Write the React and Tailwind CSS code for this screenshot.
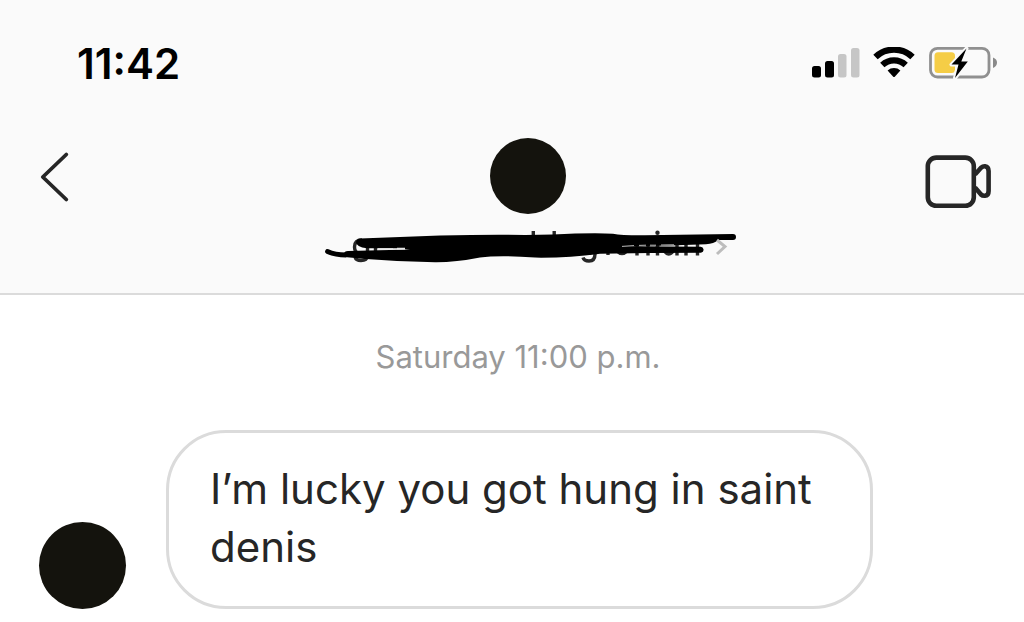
import React from "react";

const SignalBars = () => (
  <svg width="48" height="32" viewBox="812 47 48 32" aria-label="Signal">
    <rect x="812" y="66" width="9" height="11.5" rx="2.5" fill="#000" />
    <rect x="825" y="61" width="9" height="16.5" rx="2.5" fill="#000" />
    <rect x="838" y="54" width="8.5" height="23.5" rx="2.5" fill="#c6c6c6" />
    <rect x="851" y="48" width="8.5" height="29.5" rx="2.5" fill="#c6c6c6" />
  </svg>
);

const Wifi = () => (
  <svg width="42" height="32" viewBox="873 47 42 32" fill="none" aria-label="Wi-Fi">
    <path d="M875.5 57A27 27 0 0 1 912.5 57" stroke="#000" strokeWidth="6.4" />
    <path d="M882.3 65A17 17 0 0 1 905.7 65" stroke="#000" strokeWidth="6.2" />
    <path
      d="M887.6 70.6A9.5 9.5 0 0 1 900.4 70.6L895 76.4Q894 77.4 893 76.4Z"
      fill="#000"
    />
  </svg>
);

const Battery = () => (
  <svg width="70" height="34" viewBox="928 46 70 34" aria-label="Battery charging">
    <rect
      x="930.5"
      y="48.3"
      width="58.5"
      height="28.7"
      rx="7"
      fill="none"
      stroke="#909090"
      strokeWidth="2.8"
    />
    <path d="M993 57.5Q997 59 997 62.6T993 68Z" fill="#8a8a8a" />
    <rect x="934.5" y="52.3" width="20.5" height="20.7" rx="3.5" fill="#f5cd46" />
    <path
      d="M966.5 48.5L951.5 64.5H958.5L955 78L967.8 61.5H961.3Z"
      fill="#000"
      stroke="#fafafa"
      strokeWidth="4"
      strokeLinejoin="round"
      paintOrder="stroke"
    />
  </svg>
);

const BackIcon = () => (
  <svg width="30" height="52" viewBox="40 151 30 52" fill="none">
    <path
      d="M66.3 154.5L42.8 177L66.3 199.5"
      stroke="#262626"
      strokeWidth="3.8"
      strokeLinecap="round"
      strokeLinejoin="round"
    />
  </svg>
);

const VideoIcon = () => (
  <svg
    width="68"
    height="56"
    viewBox="924 154 68 56"
    fill="none"
    stroke="#262626"
    strokeWidth="4.6"
    strokeLinejoin="round"
  >
    <rect x="927.8" y="157.6" width="46" height="48.2" rx="8.5" />
    <path d="M975 174.5L981 167.8Q983 166 985 166.2Q988.6 166.8 988.6 171V191Q988.6 195.5 985 195.8Q982.5 196 981 194.5L975 187.5" />
  </svg>
);

// marker strokes over the account name, with the bits that stick out
const HiddenName = () => (
  <svg width="416" height="40" viewBox="320 226 416 40" fill="none">
    <g stroke="#262626" strokeWidth="3.4">
      <path d="M362 240Q354.5 240 354.5 247Q354.5 253 360 254" />
      <path d="M355 257Q356 260.5 361 260.5Q367 260.5 367 256" />
      <path d="M367.5 240V255M375.5 240V254" />
      <path d="M533.3 231V238M554.2 231V238M657.5 237V252" />
      <path d="M583 257.5Q584 261 589 261Q595 261 595 254" />
      <path d="M608 250V255M637 243V255.5M648 244V255.5M657.5 244V255.5M677 243V255.5M686 243V255.5M697.5 243V255.5" />
      <path d="M617 251Q622 256 627 251M664 251Q669 257 673 251" />
    </g>
    <circle cx="657.5" cy="232.7" r="2.2" fill="#262626" />
    <path
      d="M327.5 251.5Q335 255 346 255"
      stroke="#000"
      strokeWidth="4.8"
      strokeLinecap="round"
    />
    <path
      d="M360 238.5Q400 237 440 235.6Q490 234.3 525 235Q555 234.8 575 233.6Q600 232.7 613 233.8Q622 235.5 645 235.3L733 234A3 3 0 0 1 733 240L718 240Q714 244 706 244.2L670 245.5Q645 245.5 620 247L600 250H410L400 248.3H367Q356 247 356 242Q357 238.5 360 238.5Z"
      fill="#000"
    />
    <path
      d="M344 254Q344 251 348 251L400 249.7L600 246L700 246.8A2.9 2.9 0 0 1 701 252.8Q650 252.8 600 253.8Q570 258 535 257.6Q500 255 480 257.5Q455 262.5 435 262.3Q400 261.8 366 259L347 257.3Z"
      fill="#000"
    />
    <path d="M378 249H393M397 248.6H405" stroke="#e5e5e5" strokeWidth="1.6" />
    <path
      d="M622 246.4L634 245.6M639 245.4L646 245.2M650 245.2L656 245.2M661 245L674 244.8"
      stroke="#bbb"
      strokeWidth="1"
    />
    <path d="M717 240L725 246.5L717 254" stroke="#bdbdbd" strokeWidth="3" />
  </svg>
);

const Avatar = ({ className }) => (
  <div className={`shrink-0 rounded-full bg-[#14130d] ${className}`} />
);

const App = () => {
  return (
    <div className="min-h-screen w-full bg-white font-['Inter','Liberation_Sans',sans-serif] text-[#262626]">
      <header className="border-b-2 border-[#dbdbdb] bg-[#fafafa] pt-[39px] pb-[27px]">
        <div className="flex h-12 items-center justify-between pr-[26px] pl-[77px] text-black">
          <time className="text-[42px] font-semibold">11:42</time>
          <div className="flex items-center gap-[13px]">
            <SignalBars />
            <Wifi />
            <Battery />
          </div>
        </div>

        <div className="mt-[51px] grid grid-cols-[1fr_auto_1fr] items-start pr-2 pl-10">
          <button type="button" aria-label="Back" className="mt-[13px] justify-self-start">
            <BackIcon />
          </button>
          <button
            type="button"
            aria-label="Conversation details"
            className="flex flex-col items-center gap-3"
          >
            <Avatar className="size-[76px]" />
            <HiddenName />
          </button>
          <button
            type="button"
            aria-label="Video call"
            className="mt-4 mr-6 justify-self-end"
          >
            <VideoIcon />
          </button>
        </div>
      </header>

      <main className="pt-[42px]">
        <p className="pl-3 text-center text-[31px] leading-10 text-[#999]">
          Saturday 11:00 p.m.
        </p>
        <div className="mt-[53px] flex items-end gap-10 pr-[151px] pl-[39px]">
          <Avatar className="size-[87px]" />
          <p className="flex-1 rounded-[60px] border-[3px] border-[#dbdbdb] pt-[27px] pr-10 pb-[30px] pl-[41px] text-[42px] leading-[58px]">
            I’m lucky you got hung in saint denis
          </p>
        </div>
      </main>
    </div>
  );
};

export default App;
